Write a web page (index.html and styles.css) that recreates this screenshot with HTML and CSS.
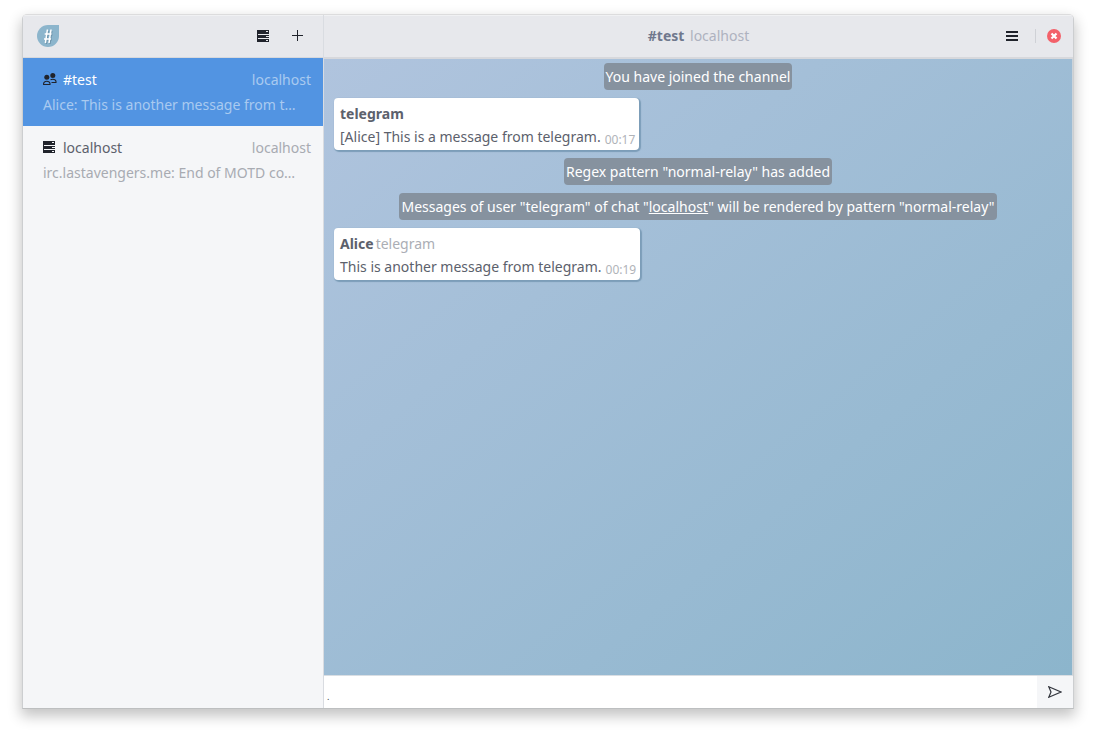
FILE: index.html
```html
<!DOCTYPE html>
<html lang="en">
<head>
<meta charset="utf-8">
<title>#test</title>
<link rel="stylesheet" href="styles.css">
</head>
<body>
<div class="window">
  <aside class="sidebar">
    <header class="titlebar side-title">
      <svg class="logo" viewBox="0 0 22 22" aria-hidden="true">
        <path d="M11 0H22V11A11 11 0 1 1 11 0Z" fill="#8cb5cc"/>
        <path d="M10.4 5L8.4 18M14 5L12 18M7.7 9H14.6M7 14H14" transform="translate(1 1)" stroke="#6d93aa" stroke-width="1.2" fill="none"/>
        <path d="M10.4 4.5L8.4 18M14 4.5L12 18M7.7 9H14.6M7 14H14" stroke="#fff" stroke-width="1.5" fill="none"/>
      </svg>
      <span class="spacer"></span>
      <button class="icon-button" aria-label="Servers">
        <svg class="server" viewBox="0 0 12 12"><path d="M0 0H12V12H0Z" fill="#20232b"/><path d="M1 4.5H12M1 8.5H12M9 1.5H11M9 6.5H12M9 10.5H11" stroke="#e7e8eb"/></svg>
      </button>
      <button class="icon-button add" aria-label="Add">
        <svg class="plus" viewBox="0 0 11 11"><path d="M5.5 0V11M0 5.5H11" stroke="#20232b" fill="none"/></svg>
      </button>
    </header>
    <nav class="chats">
      <a class="chat selected" href="#test">
        <span class="chat-top">
          <svg class="users" viewBox="0 0 14 12" aria-hidden="true"><circle cx="3.8" cy="4.3" r="2.5" fill="#20232b"/><circle cx="9.8" cy="2.5" r="2.5" fill="#20232b"/><path d="M.6 11.5V10.5Q1 8.2 3.8 8.2T7 10.5V11.5ZM7.5 6.9Q8.4 6.2 9.8 6.2Q12.7 6.2 13 8.5V9.5H8.5" stroke="#20232b" stroke-width="1.1" fill="none"/></svg>
          <span class="name">#test</span><span class="server-name">localhost</span>
        </span>
        <span class="preview">Alice: This is another message from t…</span>
      </a>
      <a class="chat" href="#localhost">
        <span class="chat-top">
          <svg class="server" viewBox="0 0 12 12" aria-hidden="true"><path d="M0 0H12V12H0Z" fill="#20232b"/><path d="M1 4.5H12M1 8.5H12M9 1.5H11M9 6.5H12M9 10.5H11" stroke="#f5f6f8"/></svg>
          <span class="name">localhost</span><span class="server-name">localhost</span>
        </span>
        <span class="preview">irc.lastavengers.me: End of MOTD co…</span>
      </a>
    </nav>
  </aside>
  <main class="main">
    <header class="titlebar main-title">
      <h1 class="title">#test <span class="subtitle">localhost</span></h1>
      <div class="controls">
        <button class="icon-button" aria-label="Menu"><svg class="menu" viewBox="0 0 12 10"><path d="M0 1H12M0 5H12M0 9H12" stroke="#20232b" stroke-width="2"/></svg></button>
        <button class="close" aria-label="Close"><svg class="close-icon" viewBox="0 0 14 14"><circle cx="7" cy="7" r="7" fill="#f3616a"/><path d="M4.5 4.5L9.5 9.5M9.5 4.5L4.5 9.5" stroke="#fff" stroke-width="2.2"/></svg></button>
      </div>
    </header>
    <section class="messages">
      <p class="notice">You have joined the channel</p>
      <article class="message">
        <div class="sender">telegram</div>
        <div class="line"><span>[Alice] This is a message from telegram.</span><time class="time">00:17</time></div>
      </article>
      <p class="notice">Regex pattern "normal-relay" has added</p>
      <p class="notice">Messages of user "telegram" of chat "<a class="link" href="#localhost">localhost</a>" will be rendered by pattern "normal-relay"</p>
      <article class="message">
        <div class="sender">Alice<span class="relay">telegram</span></div>
        <div class="line"><span>This is another message from telegram.</span><time class="time">00:19</time></div>
      </article>
    </section>
    <form class="composer">
      <input class="entry" type="text" value="." aria-label="Message">
      <button class="send" type="button" aria-label="Send"><svg class="send-icon" viewBox="0 0 14 12"><path d="M.8.8L13 6L.8 11.2L3 6Z" stroke="#33363e" stroke-width="1.2" fill="none"/></svg></button>
    </form>
  </main>
</div>
</body>
</html>
```
FILE: styles.css
```css
* { box-sizing: border-box; }
body {
  display: flex;
  min-height: 100vh;
  margin: 0;
  padding: 14px 22px 30px;
  background: #fff;
  color: #5c616c;
  font: 14px/23px "Noto Sans", "Open Sans", sans-serif;
}
button { margin: 0; padding: 0; border: 0; background: none; }
svg { display: block; flex: none; }
.window {
  display: flex;
  flex: 1;
  min-width: 0;
  overflow: hidden;
  border: 1px solid #ccced0;
  border-top-color: #dcdcdd;
  border-bottom-color: #bdbfc0;
  border-radius: 5px 5px 0 0;
  box-shadow: 0 6px 14px 1px rgba(0, 0, 0, .24);
}
.sidebar {
  display: flex;
  flex-direction: column;
  flex: none;
  width: 301px;
  border-right: 1px solid #d9dce1;
  background: #f5f6f8;
}
.titlebar {
  display: flex;
  align-items: center;
  padding-bottom: 2px;
  background: #e7e8ec;
  border-top: 1px solid #f0f1f3;
  border-bottom: 1px solid #d7d8dc;
}
.side-title { height: 43px; padding: 0 14px 2px; }
.logo { width: 22px; height: 22px; }
.spacer { flex: 1; }
.icon-button { display: grid; place-items: center; width: 36px; height: 32px; }
.side-title .add { margin-right: -6px; }
.side-title .icon-button { width: 35px; }
.server { width: 12px; height: 12px; }
.plus { width: 11px; height: 11px; }
.chat { display: block; height: 68px; padding: 9px 12px 0 20px; color: #5c616c; text-decoration: none; }
.chat-top { display: flex; align-items: center; height: 24px; margin-bottom: 2px; }
.chat-top svg { margin-right: 8px; }
.chat-top .users { width: 14px; height: 12px; margin-right: 6px; }
.server-name { margin-left: auto; color: #a8abb2; }
.preview {
  display: block;
  color: #a8abb2;
  white-space: nowrap;
}
.selected { background: #5294e2; color: #fff; }
.selected .server-name, .selected .preview { color: #a9caf0; }
.main { display: flex; flex: 1; flex-direction: column; min-width: 0; }
.main-title {
  display: grid;
  grid-template-columns: 1fr auto 1fr;
  height: 44px;
  border-bottom-width: 2px;
}
.title { grid-column: 2; margin: 0; color: #70788d; font-size: 14px; font-weight: 700; }
.subtitle { margin-left: 2px; color: #aeb2bf; font-weight: 400; }
.controls { display: flex; align-items: center; justify-self: end; }
.close { margin-left: 5px; padding: 0 12px 0 11px; border-left: 1px solid #cfd1d6; }
.menu { width: 12px; height: 10px; }
.close-icon { width: 14px; height: 14px; }
.messages {
  display: flex;
  flex: 1;
  flex-direction: column;
  align-items: flex-start;
  gap: 8px;
  padding: 4px 10px;
  border-right: 1px solid #ccd3d9;
  background: linear-gradient(to bottom right, #b0c4de, #8cb5cc);
}
.notice {
  align-self: center;
  margin: 0;
  padding: 2px;
  border-radius: 4px;
  background: #86929f;
  color: #fff;
}
.link { color: inherit; }
.message {
  padding: 4px 4px 2px 6px;
  border-radius: 4px;
  background: #fff;
  box-shadow: 1px 1px 1px 1px #7c9db8;
}
.sender { font-weight: 700; }
.relay { margin-left: 2px; color: #abaeb5; font-weight: 400; }
.line { display: flex; gap: 4px; height: 23px; }
.time { padding-top: 3px; color: #b0b3b8; font-size: 12px; }
.composer { display: flex; height: 33px; border-top: 1px solid #d9dee3; }
.entry {
  flex: 1;
  min-width: 0;
  padding: 8px 3px 0;
  border: 0;
  outline: 0;
  background: #fff;
  color: #3b3e45;
  font: 9px "Noto Sans", sans-serif;
}
.send { display: grid; place-items: center; width: 36px; background: #f5f6f8; }
.send-icon { width: 14px; height: 12px; }
```
